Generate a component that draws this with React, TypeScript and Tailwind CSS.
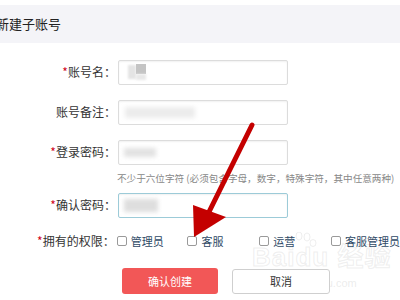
import React from 'react';

const font = { fontFamily: '"Noto Sans CJK SC", "Noto Sans", sans-serif' };

const Star = () => <span className="text-[#d0021b]">*</span>;

const Field = ({
  label,
  required,
  focus,
  blur,
}: {
  label: string;
  required?: boolean;
  focus?: boolean;
  blur: React.ReactNode;
}) => (
  <div className="flex items-center h-[24px]">
    <div className="w-[118px] pr-[2px] text-right text-[12px] text-[#333] leading-none">
      {required && <Star />}
      {label}：
    </div>
    <div
      className={`relative w-[170px] h-[25px] rounded-[2px] border bg-white shadow-[inset_0_1px_2px_rgba(0,0,0,0.06)] ${
        focus ? 'border-[#9ccbd8]' : 'border-[#dcdcdc]'
      }`}
    >
      {blur}
    </div>
  </div>
);

const Check = ({ label, className }: { label: string; className?: string }) => (
  <div className={`flex items-center gap-[4px] whitespace-nowrap ${className ?? ''}`}>
    <span className="w-[10px] h-[10px] shrink-0 rounded-[2px] border border-[#9a9a9a] bg-white" />
    <span className="text-[11px] text-[#2f4a66] leading-none">{label}</span>
  </div>
);

export default function App() {
  return (
    <div className="relative w-[400px] h-[300px] overflow-hidden bg-white" style={font}>
      {/* watermark */}
      <div
        className="absolute left-[252px] top-[244px] text-[26px] font-bold leading-none text-transparent [-webkit-text-stroke:1px_rgba(200,200,200,0.3)] tracking-[1px]"
        style={{ fontFamily: '"Liberation Sans", "Noto Sans CJK SC", sans-serif' }}
      >
        Baidu 经验
      </div>
      <div
        className="absolute left-[268px] top-[278px] text-[11px] leading-none text-[rgba(200,200,200,0.35)]"
        style={{ fontFamily: '"Liberation Sans", sans-serif' }}
      >
        jingyan.baidu.com
      </div>
      <svg
        className="absolute left-[282px] top-[232px]"
        width="40"
        height="30"
        viewBox="0 0 40 30"
        fill="none"
        stroke="rgba(200,200,200,0.3)"
        strokeWidth="1"
      >
        <ellipse cx="9" cy="8" rx="3" ry="4" />
        <ellipse cx="17" cy="4" rx="3" ry="4" />
        <ellipse cx="25" cy="5" rx="3" ry="4" />
        <ellipse cx="31" cy="11" rx="3" ry="3.5" />
      </svg>

      <div className="relative mt-[5px] h-[38px] bg-[#f4f4f8] flex items-center">
        <span className="-ml-[4px] text-[13px] text-[#222]">新建子账号</span>
      </div>

      <div className="relative mt-[17px] flex flex-col">
        <Field
          label="账号名"
          required
          blur={
            <>
              <div className="absolute left-[9px] top-[4px] w-[8px] h-[14px] bg-[#e4e4e4] blur-[1px]" />
              <div className="absolute left-[17px] top-[3px] w-[10px] h-[10px] bg-[#c4c4c4] blur-[0.5px]" />
              <div className="absolute left-[17px] top-[13px] w-[10px] h-[6px] bg-[#e8e8e8] blur-[1px]" />
            </>
          }
        />
        <div className="h-[16px]" />
        <Field
          label="账号备注"
          blur={<div className="absolute left-[6px] top-[6px] w-[70px] h-[11px] bg-[#ececec] blur-[2px]" />}
        />
        <div className="h-[16px]" />
        <Field
          label="登录密码"
          required
          blur={<div className="absolute left-[5px] top-[7px] w-[32px] h-[9px] bg-[#e2e2e2] blur-[2px]" />}
        />
        <div className="pl-[117px] mt-[7px] h-[14px] text-[9.6px] leading-[14px] text-[#888] whitespace-nowrap">
          不少于六位字符 (必须包含字母，数字，特殊字符，其中任意两种)
        </div>
        <div className="h-[8px]" />
        <Field
          label="确认密码"
          required
          focus
          blur={<div className="absolute left-[5px] top-[5px] w-[34px] h-[13px] bg-[#dedede] blur-[2px]" />}
        />
        <div className="h-[12px]" />
        <div className="flex items-center h-[24px]">
          <div className="w-[117px] pr-[2px] text-right text-[12px] text-[#333] leading-none">
            <Star />
            拥有的权限：
          </div>
          <Check label="管理员" className="w-[71px]" />
          <Check label="客服" className="w-[72px]" />
          <Check label="运营" className="w-[72px]" />
          <Check label="客服管理员" />
        </div>
        <div className="mt-[15px] flex items-center">
          <button className="ml-[122px] w-[96px] h-[26px] rounded-[3px] bg-[#f25757] text-white text-[11px] leading-none">
            确认创建
          </button>
          <button className="ml-[14px] w-[98px] h-[25px] rounded-[3px] border border-[#cfcfcf] bg-white text-[#333] text-[11px] leading-none">
            取消
          </button>
        </div>
      </div>

      {/* red arrow */}
      <svg className="absolute left-0 top-0 pointer-events-none" width="400" height="300">
        <line x1="252" y1="125" x2="205" y2="220" stroke="#c40000" strokeWidth="5" strokeLinecap="round" />
        <polygon points="194,237 193,205 226,217" fill="#c40000" />
      </svg>
    </div>
  );
}
